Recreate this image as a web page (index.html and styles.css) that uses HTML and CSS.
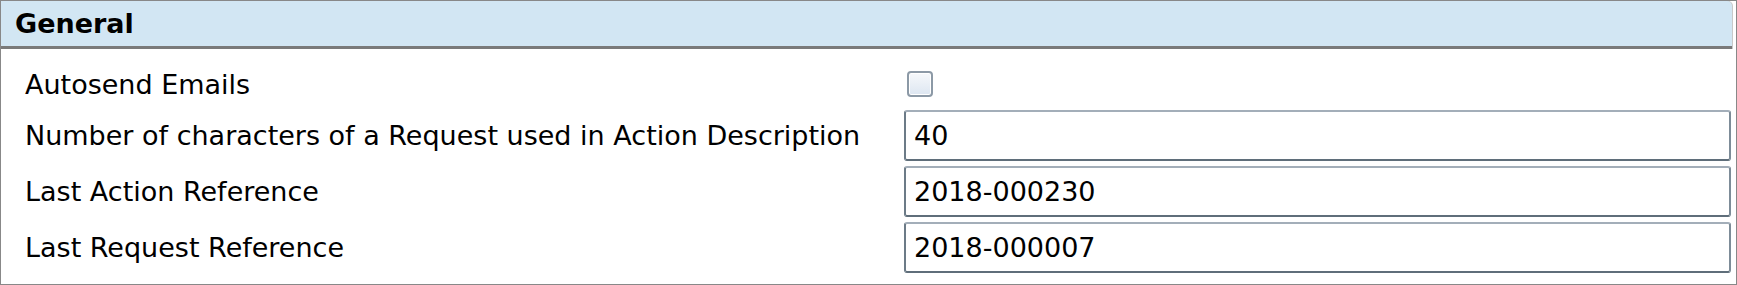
FILE: index.html
```html
<!DOCTYPE html>
<html>
<head>
    <title>Settings - General</title>
    <link rel="stylesheet" href="styles.css">
</head>
<body>
    <div class="panel">
        <div class="panel-header">General</div>
        <div class="panel-body">
            <label class="field-label" for="autosend">Autosend Emails</label>
            <div class="field-check">
                <input type="checkbox" id="autosend" name="autosend">
            </div>

            <label class="field-label" for="descChars">Number of characters of a Request used in Action Description</label>
            <input type="text" class="field-input" id="descChars" name="descChars" value="40">

            <label class="field-label" for="lastAction">Last Action Reference</label>
            <input type="text" class="field-input" id="lastAction" name="lastAction" value="2018-000230">

            <label class="field-label" for="lastRequest">Last Request Reference</label>
            <input type="text" class="field-input" id="lastRequest" name="lastRequest" value="2018-000007">
        </div>
    </div>
</body>
</html>
```

FILE: styles.css
```css
body {
    margin: 0;
    padding: 0;
    background-color: #ffffff;
    font-family: "DejaVu Sans", Verdana, sans-serif;
    color: #000000;
}

.panel {
    width: 1737px;
    height: 285px;
    box-sizing: border-box;
    border: 1px solid #888888;
}

.panel-header {
    height: 45px;
    margin-right: 4px;
    padding-left: 14px;
    line-height: 45px;
    font-size: 27px;
    font-weight: bold;
    background-color: #d2e6f3;
    border-bottom: 3px solid #7a7a7a;
    border-top-right-radius: 5px;
    box-shadow: 1px 0 0 #c8c8c8;
}

.panel-body {
    display: grid;
    grid-template-columns: 879px 1fr;
    grid-template-rows: 42px 51px 51px 51px;
    row-gap: 5px;
    padding: 14px 5px 10px 24px;
}

.field-label {
    display: flex;
    align-items: center;
    font-size: 27px;
    white-space: nowrap;
}

.field-check {
    display: flex;
    align-items: center;
}

.field-check input {
    appearance: none;
    -webkit-appearance: none;
    width: 26px;
    height: 26px;
    margin: 0 0 0 3px;
    box-sizing: border-box;
    border: 2px solid #8c99a6;
    border-radius: 4px;
    background: linear-gradient(#f6f8fb, #dde6f1);
    box-shadow: inset 0 0 0 1px #ffffff;
}

.field-input {
    height: 51px;
    box-sizing: border-box;
    margin: 0;
    padding: 0 8px;
    font-family: "DejaVu Sans", Verdana, sans-serif;
    font-size: 27px;
    color: #000000;
    border: 2px solid;
    border-color: #a3aeb9 #7d8c98 #5f6e7a #6c7b87;
    border-radius: 3px;
    background-color: #ffffff;
    outline: none;
}
```
